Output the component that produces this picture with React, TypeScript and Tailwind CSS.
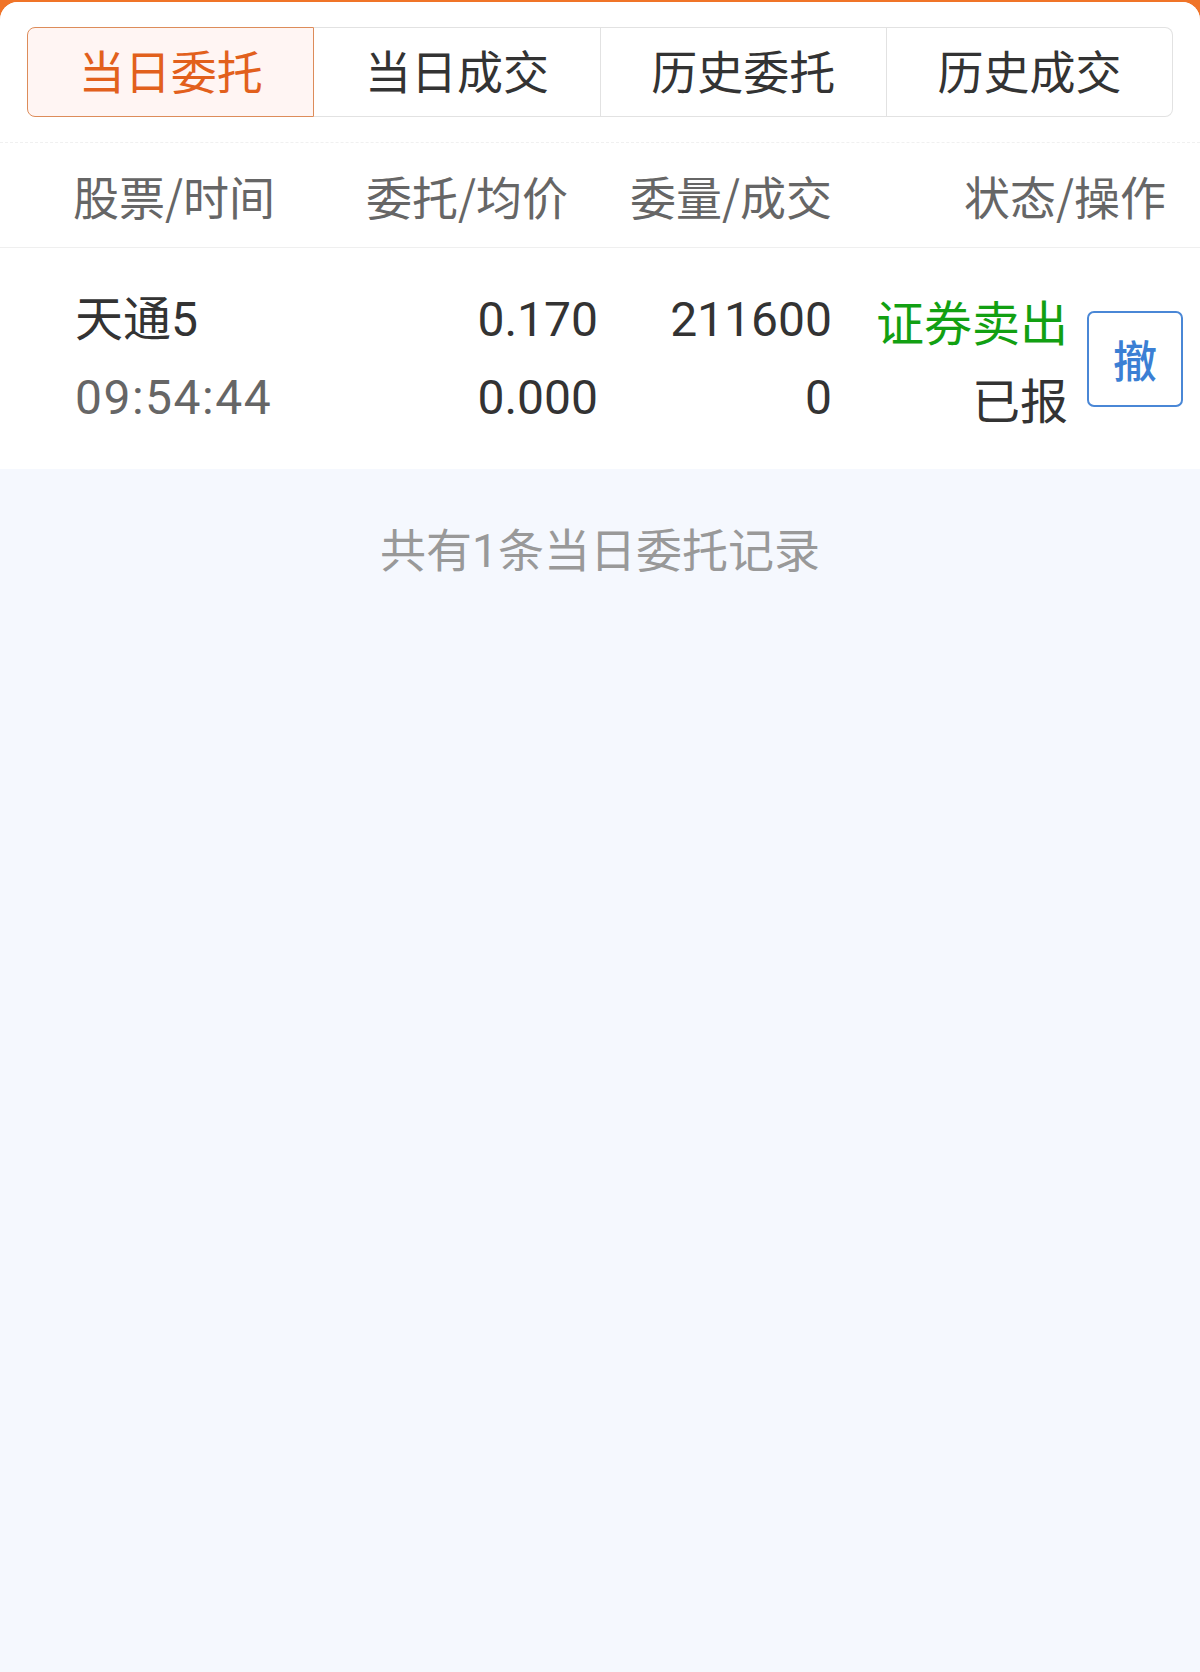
import React from 'react';

const cjk = "font-['Noto_Sans_CJK_SC',sans-serif]";
const num = "font-['Roboto','Noto_Sans_CJK_SC',sans-serif]";

const tabs = ['当日委托', '当日成交', '历史委托', '历史成交'];

export default function App() {
  return (
    <div className="min-h-[1672px] bg-[#f07428] pt-[2px]">
      <div className="h-[1670px] overflow-hidden rounded-t-[18px] bg-[#f5f8fe]">
        <div className="bg-white pt-[25px]">
          {/* tab switcher */}
          <div className={`mx-[27px] flex h-[90px] text-[46px] leading-none ${cjk}`}>
            {tabs.map((t, i) => (
              <div
                key={t}
                className={
                  i === 0
                    ? 'flex flex-1 items-center justify-center rounded-l-[8px] border-[1.5px] border-[#dd8c5a] bg-[#fff5f3] pb-[6px] text-[#e2601c]'
                    : i === 3
                      ? 'flex flex-1 items-center justify-center rounded-r-[8px] border-y-[1.5px] border-r-[1.5px] border-[#e2e2e2] pb-[6px] text-[#333]'
                      : 'flex flex-1 items-center justify-center border-y-[1.5px] border-r-[1.5px] border-[#e2e2e2] pb-[6px] text-[#333]'
                }
              >
                {t}
              </div>
            ))}
          </div>

          <div className="mt-[25px] border-t border-dashed border-[#f0f0f0]" />

          {/* column header */}
          <div className={`flex h-[105px] items-center whitespace-nowrap border-b-[1.5px] border-[#efefef] text-[46px] leading-none text-[#666] ${cjk}`}>
            <div className="w-[366px] pl-[73px]">股票/时间</div>
            <div className="w-[230px]">委托/均价</div>
            <div className="w-[236px] text-right">委量/成交</div>
            <div className="flex-1 pr-[34px] text-right">状态/操作</div>
          </div>

          {/* order row */}
          <div className={`flex h-[221px] items-center whitespace-nowrap text-[48px] leading-[78px] text-[#333] ${num}`}>
            <div className="w-[366px] pl-[75px]">
              <div>天通5</div>
              <div className="tracking-[1.5px] text-[#666]">09:54:44</div>
            </div>
            <div className="w-[232px] text-right">
              <div>0.170</div>
              <div>0.000</div>
            </div>
            <div className="w-[234px] text-right">
              <div>211600</div>
              <div>0</div>
            </div>
            <div className={`w-[236px] text-right ${cjk}`}>
              <div className="text-[#12a012]">证券卖出</div>
              <div>已报</div>
            </div>
            <div className="ml-[19px] flex h-[96px] w-[96px] items-center justify-center rounded-[7px] border-2 border-[#4a87d6]">
              <span className={`text-[44px] font-medium leading-none text-[#3b7fd4] ${cjk}`}>撤</span>
            </div>
          </div>
        </div>

        <p className={`pt-[54px] text-center text-[46px] leading-[56px] text-[#999] ${num}`}>共有1条当日委托记录</p>
      </div>
    </div>
  );
}
